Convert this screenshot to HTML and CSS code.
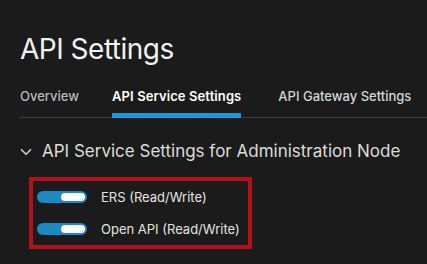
FILE: index.html
```html
<!DOCTYPE html>
<html lang="en">
<head>
  <meta charset="UTF-8" />
  <link rel="stylesheet" href="styles.css">
</head>
<body>
  <div class="page">
    <h1 class="title">API Settings</h1>
    <nav class="tabs">
      <span class="tab">Overview</span>
      <span class="tab active">API Service Settings</span>
      <span class="tab">API Gateway Settings</span>
    </nav>

    <section class="section">
      <div class="section-head">
        <svg class="chevron" width="12" height="8" viewBox="0 0 12 8">
          <path d="M1 1.2 L6 6.2 L11 1.2" fill="none" stroke="#d6d6d6" stroke-width="1.5" />
        </svg>
        <span>API Service Settings for Administration Node</span>
      </div>

      <div class="highlight">
        <div class="option">
          <span class="toggle on"><span class="knob"></span></span>
          <span class="label">ERS (Read/Write)</span>
        </div>
        <div class="option">
          <span class="toggle on"><span class="knob"></span></span>
          <span class="label">Open API (Read/Write)</span>
        </div>
      </div>
    </section>
  </div>
</body>
</html>
```

FILE: styles.css
```css
:root {
  --bg: #1b1b1b;
  --text: #f2f2f2;
  --muted: #b9babc;
  --accent: #1f97d1;
  --line: #3b3c3f;
  --alert: #b30f1c;
  --font-base: Inter, "Liberation Sans", sans-serif;
}
*, *::before, *::after { box-sizing: border-box; }
html, body { height: 100%; }
body {
  margin: 0;
  background: var(--bg);
  color: var(--text);
  font-family: var(--font-base);
  overflow: hidden;
}
.page { padding: 32px 0 0 19px; }
.title {
  margin: 0 0 0 1px;
  font-size: 28px;
  font-weight: 400;
  line-height: 34px;
  letter-spacing: -0.5px;
}
.tabs {
  display: flex;
  margin-top: 22px;
  padding-left: 1px;
  border-bottom: 1px solid var(--line);
}
.tab {
  font-size: 13px;
  line-height: 16px;
  padding-bottom: 13px;
  margin-right: 36px;
  color: var(--muted);
  font-weight: 500;
}
.tab:first-child { margin-right: 33px; }
.tab:last-child { color: #d4d5d7; margin-right: 0; }
.tab.active {
  color: #fff;
  font-weight: 600;
  letter-spacing: 0.1px;
  border-bottom: 5px solid var(--accent);
  margin-bottom: -1px;
  margin-right: 37px;
  padding-bottom: 9px;
}
.section { padding-top: 22px; }
.section-head {
  display: flex;
  align-items: center;
  gap: 10px;
  padding-left: 1px;
  font-size: 17px;
  color: #dcdcdc;
  line-height: 22px;
}
.chevron { flex: none; margin-top: 1px; }
.highlight {
  width: 223px;
  margin: 15px 0 0 10px;
  padding: 6px 0 6px 4px;
  border: 4px solid var(--alert);
  display: flex;
  flex-direction: column;
  gap: 12px;
}
.option {
  display: flex;
  align-items: center;
  gap: 14px;
  height: 20px;
}
.toggle {
  width: 50px;
  height: 12px;
  border-radius: 6px;
  background: #1b8ac4;
  display: flex;
  align-items: center;
  justify-content: flex-end;
  padding-right: 2px;
}
.knob {
  width: 24px;
  height: 8px;
  border-radius: 4px;
  background: #fff;
}
.label { font-size: 13px; color: #e4e4e4; }
```
